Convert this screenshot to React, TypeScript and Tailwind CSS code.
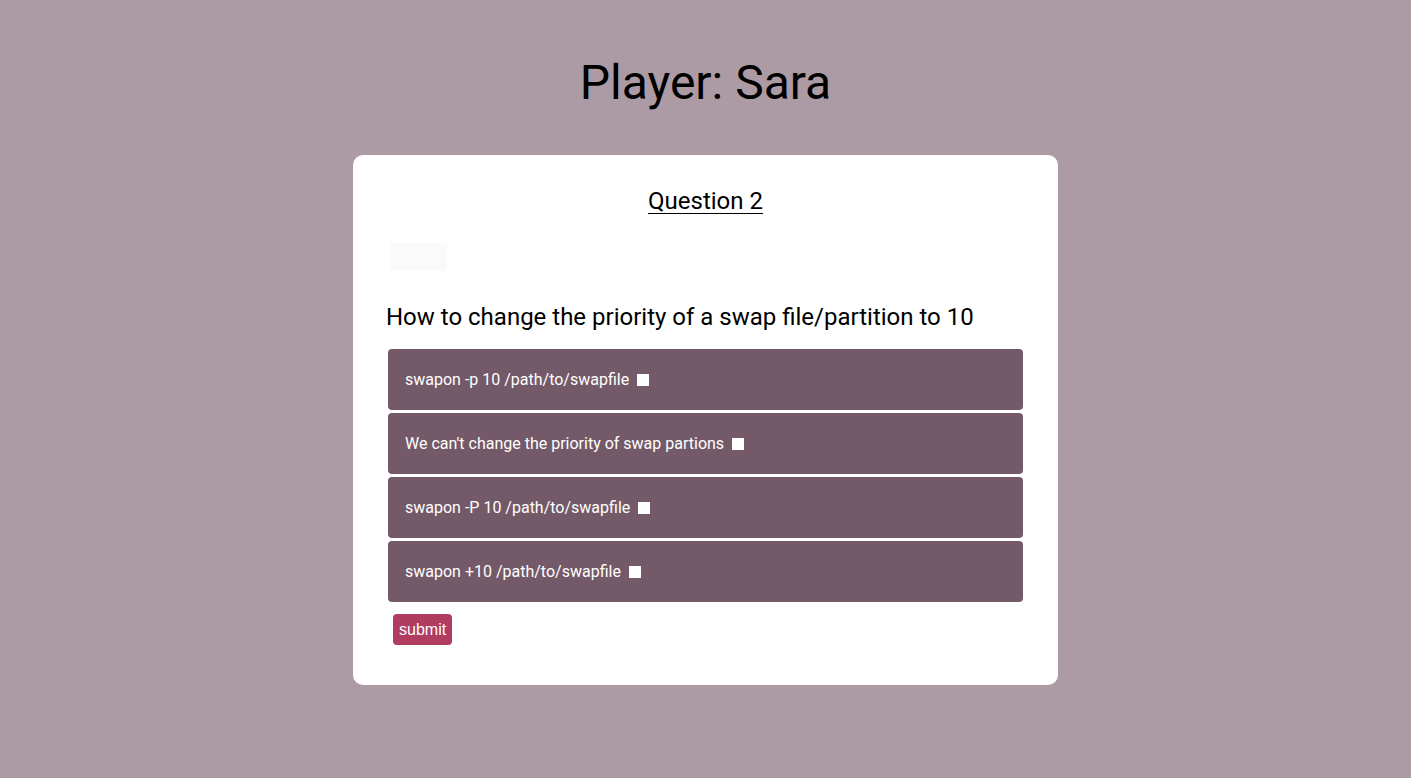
import React, { useState } from 'react';

const options = [
  'swapon -p 10 /path/to/swapfile',
  "We can't change the priority of swap partions",
  'swapon -P 10 /path/to/swapfile',
  'swapon +10 /path/to/swapfile',
];

const App: React.FC = () => {
  const [checked, setChecked] = useState<boolean[]>([false, false, false, false]);

  const toggle = (i: number) => {
    setChecked(checked.map((c, j) => (j === i ? !c : c)));
  };

  return (
    <div className="min-h-screen w-full bg-[#ac9aa5] flex flex-col items-center pt-[55px] font-['Roboto',_'Liberation_Sans',_sans-serif]">
      <h1 className="text-[48px] leading-[56px] text-black">Player: Sara</h1>

      <div className="mt-[44px] w-[705px] h-[530px] bg-white rounded-[10px] pt-[32px] px-[33px]">
        <h2 className="text-center text-[24px] leading-[28px] underline underline-offset-[4px] decoration-1">Question 2</h2>

        {/* timer box (blank) */}
        <div className="mt-[28px] ml-[4px] w-[57px] h-[28px] bg-[#fafafa]"></div>

        <p className="mt-[30px] text-[24px] leading-[32px] text-black">
          How to change the priority of a swap file/partition to 10
        </p>

        <div className="mt-[16px] ml-[2px] w-[635px] flex flex-col gap-[3px]">
          {options.map((opt, i) => (
            <label
              key={i}
              className="h-[61px] bg-[#745a68] rounded-[4px] flex items-center pl-[17px] text-white text-[16px] cursor-pointer"
            >
              <span>{opt}</span>
              <span
                onClick={() => toggle(i)}
                className={`ml-[8px] w-[12px] h-[12px] ${checked[i] ? 'bg-gray-300' : 'bg-white'}`}
              ></span>
            </label>
          ))}
        </div>

        <button className="mt-[12px] ml-[7px] h-[31px] px-[6px] bg-[#b03c5f] rounded-[4px] text-white text-[16px] font-['Liberation_Sans',_sans-serif]">
          submit
        </button>
      </div>
    </div>
  );
};

export default App;
